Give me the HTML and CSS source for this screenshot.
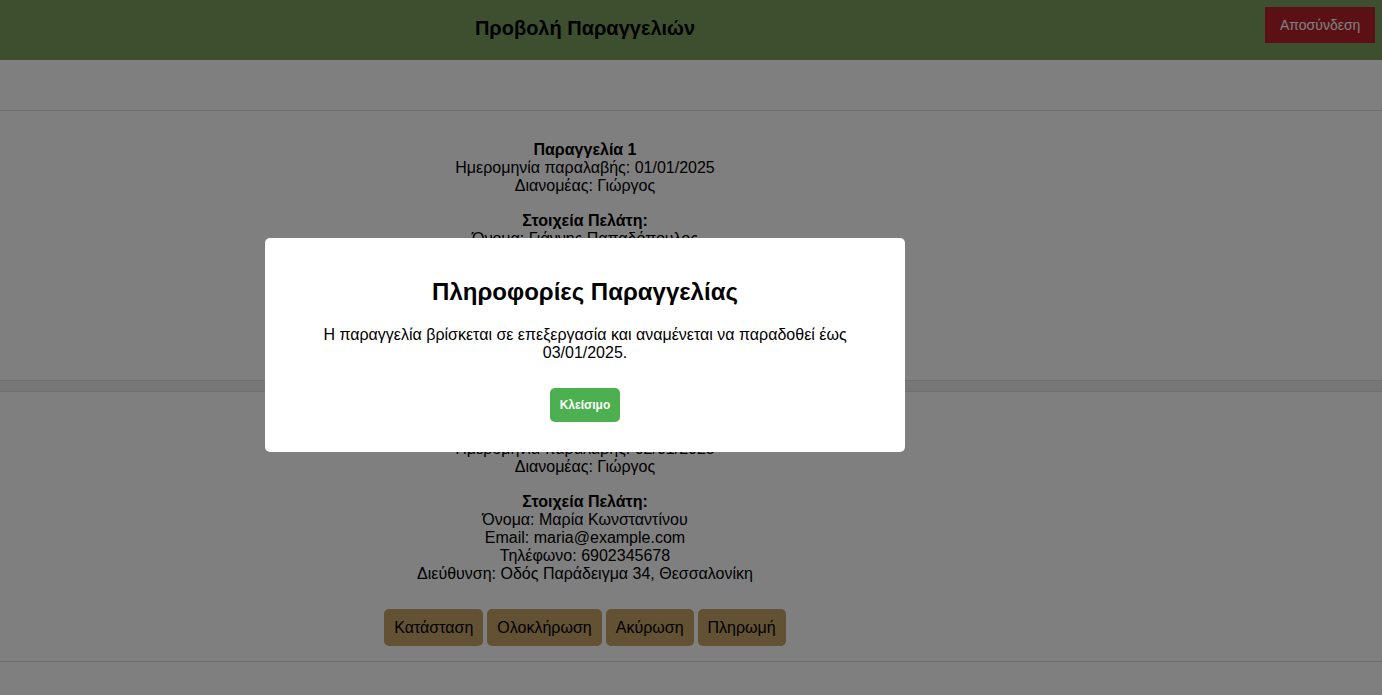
FILE: index.html
```html
<!DOCTYPE html>
<html lang="el">
<head>
<meta charset="utf-8">
<title>Προβολή Παραγγελιών</title>
<link rel="stylesheet" href="styles.css">
</head>
<body>
<header class="topbar">
  <h1 class="topbar-title">Προβολή Παραγγελιών</h1>
  <button class="logout-btn">Αποσύνδεση</button>
</header>
<main class="page">
  <div class="order-list">
    <section class="order">
      <p><strong>Παραγγελία 1</strong><br>Ημερομηνία παραλαβής: 01/01/2025<br>Διανομέας: Γιώργος</p>
      <p class="customer"><strong>Στοιχεία Πελάτη:</strong><br>Όνομα: Γιάννης Παπαδόπουλος<br>Email: giannis@example.com<br>Τηλέφωνο: 6901234567<br>Διεύθυνση: Οδός Παράδειγμα 12, Αθήνα</p>
      <div class="actions">
        <button class="action-btn">Κατάσταση</button>
        <button class="action-btn">Ολοκλήρωση</button>
        <button class="action-btn">Ακύρωση</button>
        <button class="action-btn">Πληρωμή</button>
      </div>
    </section>
    <section class="order">
      <p><strong>Παραγγελία 2</strong><br>Ημερομηνία παραλαβής: 02/01/2025<br>Διανομέας: Γιώργος</p>
      <p class="customer"><strong>Στοιχεία Πελάτη:</strong><br>Όνομα: Μαρία Κωνσταντίνου<br>Email: maria@example.com<br>Τηλέφωνο: 6902345678<br>Διεύθυνση: Οδός Παράδειγμα 34, Θεσσαλονίκη</p>
      <div class="actions">
        <button class="action-btn">Κατάσταση</button>
        <button class="action-btn">Ολοκλήρωση</button>
        <button class="action-btn">Ακύρωση</button>
        <button class="action-btn">Πληρωμή</button>
      </div>
    </section>
  </div>
</main>
<div class="overlay">
  <div class="modal">
    <h2 class="modal-title">Πληροφορίες Παραγγελίας</h2>
    <p class="modal-text">Η παραγγελία βρίσκεται σε επεξεργασία και αναμένεται να παραδοθεί έως 03/01/2025.</p>
    <button class="close-btn">Κλείσιμο</button>
  </div>
</div>
</body>
</html>
```
FILE: styles.css
```css
html, body {
  margin: 0;
  padding: 0;
}
body {
  font-family: "Liberation Sans", Arial, sans-serif;
  font-size: 16px;
  color: #000;
  background: #fff;
}
.topbar {
  height: 60px;
  box-sizing: border-box;
  background: #7a9e5c;
  display: flex;
  align-items: flex-start;
  padding: 7px 7px 0 7px;
}
.topbar-title {
  flex: 1;
  margin: 10px 0 0 0;
  padding-right: 102px;
  text-align: center;
  font-size: 20px;
  font-weight: bold;
  line-height: 23px;
}
.logout-btn {
  background: #b42028;
  color: #fff;
  border: none;
  border-radius: 0;
  font-family: "Liberation Sans", Arial, sans-serif;
  font-size: 14px;
  padding: 10px 15px;
  height: 36px;
  width: 110px;
}
.page {
  padding-top: 50px;
}
.order-list {
  display: flex;
  flex-direction: column;
  gap: 10px;
  background: #eeeeee;
}
.order {
  background: #fff;
  border-top: 1px solid #dddddd;
  border-bottom: 1px solid #dddddd;
  padding: 14px 212px 15px 0;
  text-align: center;
}
.order p {
  margin: 16px 0;
  line-height: 18px;
}
.order p.customer {
  margin-top: 17px;
}
.actions {
  margin-top: 26px;
  display: flex;
  justify-content: center;
  gap: 4px;
}
.action-btn {
  background: #c6a268;
  color: #000;
  border: none;
  border-radius: 5px;
  font-family: "Liberation Sans", Arial, sans-serif;
  font-size: 16px;
  padding: 0 10px;
  height: 37px;
}
.overlay {
  position: fixed;
  inset: 0;
  background: rgba(0, 0, 0, 0.5);
  display: flex;
  justify-content: center;
  align-items: flex-start;
  padding-right: 212px;
}
.modal {
  margin-top: 238px;
  width: 600px;
  padding: 20px;
  background: #fff;
  border-radius: 5px;
  text-align: center;
}
.modal-title {
  font-size: 24px;
  font-weight: bold;
  margin: 20px 0;
  line-height: 28px;
}
.modal-text {
  margin: 16px 0;
  line-height: 18px;
}
.close-btn {
  background: #4caf50;
  color: #fff;
  border: none;
  border-radius: 5px;
  font-family: "Liberation Sans", Arial, sans-serif;
  font-size: 12px;
  font-weight: bold;
  height: 34px;
  padding: 0 10px;
  margin: 10px 0;
}
```
